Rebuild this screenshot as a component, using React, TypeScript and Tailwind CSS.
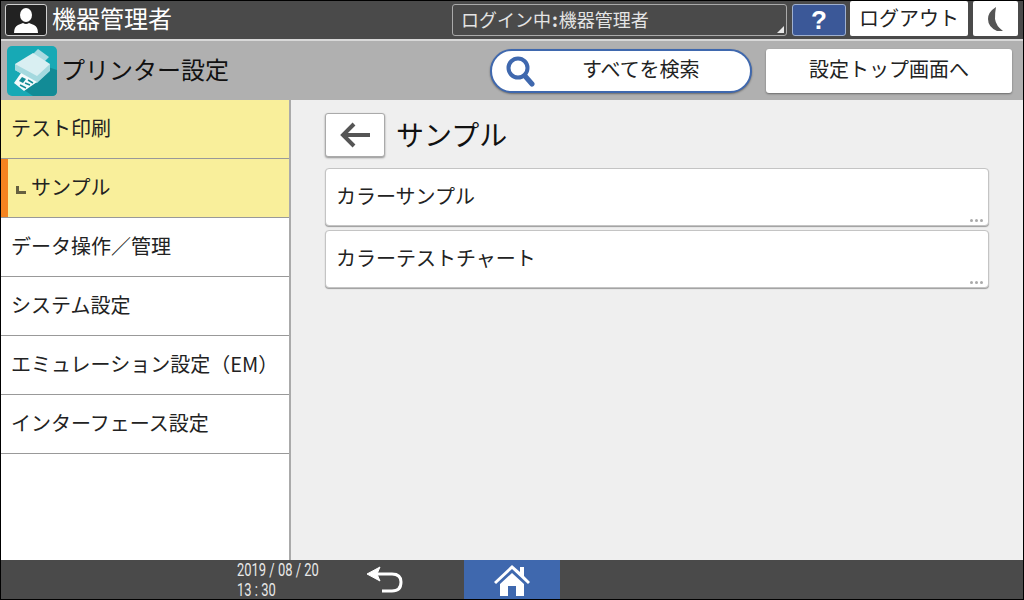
import React from 'react';

const font = "font-['Noto_Sans_CJK_JP','Noto_Sans',sans-serif]";

const menu = [
    { label: 'テスト印刷', active: true },
    { label: 'サンプル', active: true, sub: true },
    { label: 'データ操作／管理' },
    { label: 'システム設定' },
    { label: 'エミュレーション設定（EM）' },
    { label: 'インターフェース設定' },
];

const items = ['カラーサンプル', 'カラーテストチャート'];

const PrinterLogo = () => (
    <svg width="50" height="50" viewBox="0 0 50 50" className="shrink-0">
        <rect width="50" height="50" rx="5" fill="#17a9b5" />
        <path d="M50 24 L50 45 Q50 50 45 50 L26 50 L8 38 L38 20 Z" fill="#128b96" />
        <path d="M26 8 L31 3 L42 11 L37 16 Z" fill="#a9dbe1" />
        <path d="M8 18 L26 7 L43 18 L43 24 L30 36 L8 24 Z" fill="#d9eff2" />
        <path d="M8 18 L8 24 L30 37 L43 25 L43 18 L30 30 Z" fill="#a4d9df" />
        <path d="M14 27 L30 36 L17 45 L7 37 Z" fill="#f4fbfc" />
        <path d="M15 31 L19 33 L16 37 L12 35 Z" fill="#128b96" />
        <path d="M21 34 L26 37 M18 37 L23 39 M13 39 L19 42" stroke="#128b96" strokeWidth="1.5" />
    </svg>
);

export default function App() {
    return (
        <div className={`w-[1024px] h-[600px] flex flex-col overflow-hidden bg-[#efefef] border border-black ${font}`}>
            {/* Top bar */}
            <div className="h-[40px] bg-[#4a4a4a] border-b-2 border-[#d8d8d8] flex items-start shrink-0 pl-[4px]">
                <div className="mt-[3px] w-[42px] h-[32px] rounded-[3px] border border-[#d0d0d0] bg-[#222] flex items-center justify-center">
                    <svg width="28" height="28" viewBox="0 0 28 28" fill="#fff">
                        <ellipse cx="14" cy="9" rx="6" ry="7" />
                        <path d="M2 27 Q2 21 6 19 L11 17 Q14 19 17 17 L22 19 Q26 21 26 27 Z" />
                    </svg>
                </div>
                <span className="ml-[5px] mt-[-1px] text-[24px] leading-[36px] text-white">機器管理者</span>
                <div className="relative ml-auto mt-[3px] w-[335px] h-[32px] rounded-[3px] border border-[#aaa] flex items-center pl-2 pb-[2px] text-[18px] text-[#e4e4e4]">
                    ログイン中<span className="font-bold mx-[1px]">:</span>機器管理者
                    <div className="absolute right-[2px] bottom-[2px] w-0 h-0 border-l-[7px] border-l-transparent border-b-[7px] border-b-[#e8e8e8]" />
                </div>
                <div className="ml-[5px] mt-[3px] w-[54px] h-[32px] rounded-[3px] border border-[#9fb0d0] bg-[#3b5898] flex items-center justify-center text-[26px] font-bold text-white font-['Liberation_Sans',sans-serif]">?</div>
                <div className="ml-1 mt-0 w-[118px] h-[35px] rounded-[2px] bg-white flex items-center justify-center pb-[2px] text-[20px] text-[#222]">ログアウト</div>
                <div className="ml-[5px] mr-[5px] mt-0 w-[45px] h-[35px] rounded-[2px] bg-white flex items-center justify-center">
                    <svg width="20" height="26" viewBox="0 0 20 26">
                        <path d="M10 1 Q2 6 2 13 Q2 21 11 25 L17 25 Q10 20 9 13 Q9 6 10 1 Z" fill="#555" />
                    </svg>
                </div>
            </div>

            {/* Title bar */}
            <div className="h-[59px] bg-[#b0b0b0] flex items-center shrink-0 pl-[6px] pr-[11px]">
                <PrinterLogo />
                <span className="ml-[4px] pb-[3px] text-[24px] text-[#111]">プリンター設定</span>
                <div className="ml-auto w-[262px] h-[44px] rounded-full bg-white border-2 border-[#3f68ae] shadow-[0_1px_2px_rgba(0,0,0,0.4)] flex items-center relative">
                    <svg width="30" height="32" viewBox="0 0 30 32" fill="none" stroke="#3f68ae" className="ml-[13px] shrink-0">
                        <circle cx="13" cy="13" r="9.5" strokeWidth="4" />
                        <path d="M20 21 L27 29" strokeWidth="5" strokeLinecap="round" />
                    </svg>
                    <span className="absolute left-[90px] top-[5px] text-[20px] leading-[26px] text-[#222]">すべてを検索</span>
                </div>
                <div className="ml-[14px] w-[246px] h-[44px] rounded-[3px] bg-white shadow-[0_1px_2px_rgba(0,0,0,0.4)] flex items-center justify-center pb-[3px] text-[20px] text-[#222]">設定トップ画面へ</div>
            </div>

            {/* Body */}
            <div className="flex-1 flex min-h-0">
                <div className="w-[290px] shrink-0 bg-white border-r-2 border-r-[#aaa]">
                    {menu.map(m => (
                        <div
                            key={m.label}
                            className={`relative h-[59px] flex items-center pb-[3px] border-b border-[#999] text-[20px] text-[#222] ${m.active ? 'bg-[#f9ef9b]' : 'bg-white'} ${m.sub ? 'pl-[30px]' : 'pl-[10px]'}`}
                        >
                            {m.sub && <div className="absolute left-0 top-0 bottom-0 w-[7px] bg-[#f5841f]" />}
                            {m.sub && <div className="absolute left-[15px] top-[27px] w-[10px] h-[8px] border-l-[3px] border-b-[3px] border-[#666040]" />}
                            <span>{m.label}</span>
                        </div>
                    ))}
                </div>
                <div className="flex-1 pl-[34px] pr-[34px] pt-[12px]">
                    <div className="flex items-center h-[45px]">
                        <div className="w-[60px] h-[44px] rounded-[3px] bg-white border border-[#aaa] shadow-[0_1px_2px_rgba(0,0,0,0.4)] flex items-center justify-center">
                            <svg width="32" height="26" viewBox="0 0 32 26" fill="none" stroke="#555" strokeWidth="4">
                                <path d="M31 13 H4 M15 2 L4 13 L15 24" />
                            </svg>
                        </div>
                        <span className="ml-[11px] pb-[2px] text-[28px] text-[#111]">サンプル</span>
                    </div>
                    <div className="mt-[11px] flex flex-col gap-[4px]">
                        {items.map(it => (
                            <div key={it} className="relative h-[58px] rounded-[4px] bg-white border border-[#c4c4c4] shadow-[0_1px_1px_rgba(0,0,0,0.35)] flex items-center pl-[10px] pb-[3px] text-[20px] text-[#222]">
                                {it}
                                <div className="absolute right-[5px] bottom-[3px] flex gap-[2px]">
                                    <div className="w-[3px] h-[3px] rounded-full bg-[#aaa]" />
                                    <div className="w-[3px] h-[3px] rounded-full bg-[#aaa]" />
                                    <div className="w-[3px] h-[3px] rounded-full bg-[#aaa]" />
                                </div>
                            </div>
                        ))}
                    </div>
                </div>
            </div>

            {/* Footer */}
            <div className="h-[39px] bg-[#4a4a4a] shrink-0 flex items-stretch text-white">
                <div className="ml-[236px] w-[115px] -mr-[25px] text-[18px] leading-[20px] text-[#e8e8e8] font-['Roboto',sans-serif] scale-x-[0.72] origin-left">
                    <div className="whitespace-nowrap">2019 / 08 / 20</div>
                    <div>13 : 30</div>
                </div>
                <div className="ml-[38px] w-[40px] flex items-center justify-center">
                    <svg width="38" height="30" viewBox="0 0 38 30" fill="none" stroke="#fff" strokeWidth="3">
                        <path d="M8 9 H26 Q35 9 35 17 Q35 26 26 26 H16" />
                        <path d="M1 9 L14 2 L11 9 L14 16 Z" fill="#fff" strokeWidth="1" />
                    </svg>
                </div>
                <div className="ml-[59px] w-[96px] bg-[#3f68ae] flex items-center justify-center">
                    <svg width="38" height="32" viewBox="0 0 38 32" fill="#fff">
                        <path d="M1 18 L19 1 L27 8 L27 3 L31 3 L31 12 L37 18 L35 20 L19 5 L3 20 Z" />
                        <path d="M7 20 L19 9 L31 20 L31 32 L23 32 L23 22 L15 22 L15 32 L7 32 Z" />
                    </svg>
                </div>
            </div>
        </div>
    );
}
